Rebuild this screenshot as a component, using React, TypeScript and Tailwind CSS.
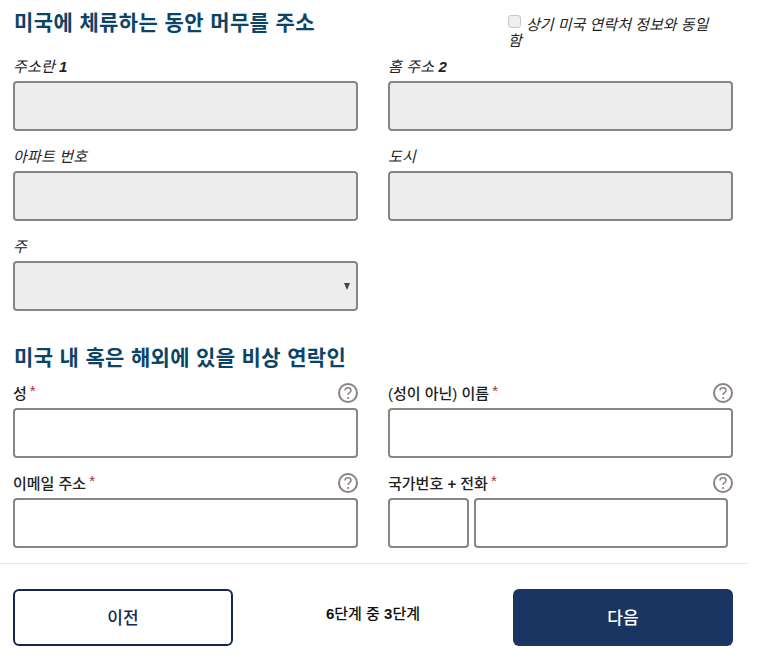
const font = "font-['Liberation_Sans','Noto_Sans_CJK_KR',sans-serif]";

function Help() {
  return (
    <svg width="20" height="20" viewBox="0 0 20 20" className="block">
      <circle cx="10" cy="10" r="9" fill="white" stroke="#8a8280" strokeWidth="2" />
      <path d="M7 7.6c0-1.8 1.3-2.9 3-2.9s3 1.1 3 2.6c0 1.1-.6 1.8-1.5 2.4-.9.6-1.4 1.1-1.4 2.2" fill="none" stroke="#8a8280" strokeWidth="1.5" />
      <circle cx="10.1" cy="15" r="1.1" fill="#8a8280" />
    </svg>
  );
}

function GrayInput() {
  return <div className="h-[50px] rounded-[4px] border-2 border-[#868686] bg-[#ededed]" />;
}

function WhiteInput({ className = "" }: { className?: string }) {
  return <div className={`h-[50px] rounded-[4px] border-2 border-[#868686] bg-white ${className}`} />;
}

function ItalicField({ label, num, select }: { label: string; num?: string; select?: boolean }) {
  return (
    <div>
      <div className="h-[30px] pt-[6px] text-[15px] leading-[20px] tracking-[0.2px] italic text-[#222]">
        {label}
        {num ? <b className="ml-[4px]">{num}</b> : null}
      </div>
      {select ? (
        <div className="flex h-[50px] items-center justify-end rounded-[4px] border-2 border-[#868686] bg-[#ededed] pr-[6px]">
          <svg width="6" height="7" viewBox="0 0 6 7"><path d="M0 0h6L3 7z" fill="#444" /></svg>
        </div>
      ) : (
        <GrayInput />
      )}
    </div>
  );
}

function ReqLabel({ label }: { label: React.ReactNode }) {
  return (
    <div className="flex h-[27px] items-start justify-between">
      <span className="pt-[3px] text-[15px] leading-[20px] font-medium text-[#222]">
        {label}
        <span className="relative top-[-3px] ml-[3px] text-[#b0263a]">*</span>
      </span>
      <div className="pt-[2px]"><Help /></div>
    </div>
  );
}

export default function App() {
  return (
    <div className={`h-[663px] w-[776px] overflow-hidden bg-white ${font}`}>
      <div className="w-[748px]">
        <div className="pl-[13px] pr-[15px]">
          <div className="flex h-[51px] justify-between">
            <h2 className="pt-[9px] pl-[1px] text-[21px] leading-[28px] font-bold tracking-[0.4px] text-[#0a4568]">미국에 체류하는 동안 머무를 주소</h2>
            <div className="mr-[15px] w-[210px] pt-[15px] text-[15px] leading-[16px] italic text-[#222]">
              <span className="mr-[5px] inline-block h-[13px] w-[13px] rounded-[3px] border border-[#c8c8c8] bg-[#efefef] align-[2px]" />
              상기 미국 연락처 정보와 동일 함
            </div>
          </div>
          <div className="grid grid-cols-[345px_345px] gap-x-[30px] gap-y-[10px]">
            <ItalicField label="주소란" num="1" />
            <ItalicField label="홈 주소" num="2" />
            <ItalicField label="아파트 번호" />
            <ItalicField label="도시" />
            <ItalicField label="주" select />
          </div>
          <h2 className="mt-[33px] pl-[1px] text-[21px] leading-[28px] font-bold tracking-[0.35px] text-[#0a4568]">미국 내 혹은 해외에 있을 비상 연락인</h2>
          <div className="mt-[9px] grid grid-cols-[345px_345px] gap-x-[30px] gap-y-[13px]">
            <div>
              <ReqLabel label="성" />
              <WhiteInput />
            </div>
            <div>
              <ReqLabel label="(성이 아닌) 이름" />
              <WhiteInput />
            </div>
            <div>
              <ReqLabel label="이메일 주소" />
              <WhiteInput />
            </div>
            <div>
              <ReqLabel label={<>국가번호 <b>+</b> 전화</>} />
              <div className="flex gap-[5px]">
                <WhiteInput className="w-[81px]" />
                <WhiteInput className="w-[254px]" />
              </div>
            </div>
          </div>
        </div>
        <div className="mt-[15px] flex h-[100px] items-start justify-between border-t border-[#e8e8e8] pl-[13px] pr-[15px] pt-[25px]">
          <button className="h-[57px] w-[220px] rounded-[6px] border-2 border-[#14284f] bg-white pt-[2px] text-[17px] font-medium text-[#14284f]">이전</button>
          <div className="pt-[15px] text-[15px] leading-[20px] font-medium text-[#111]"><b>6</b>단계 중 <b>3</b>단계</div>
          <button className="h-[57px] w-[220px] rounded-[6px] bg-[#1a3562] pt-[2px] text-[17px] font-medium text-white">다음</button>
        </div>
      </div>
    </div>
  );
}
